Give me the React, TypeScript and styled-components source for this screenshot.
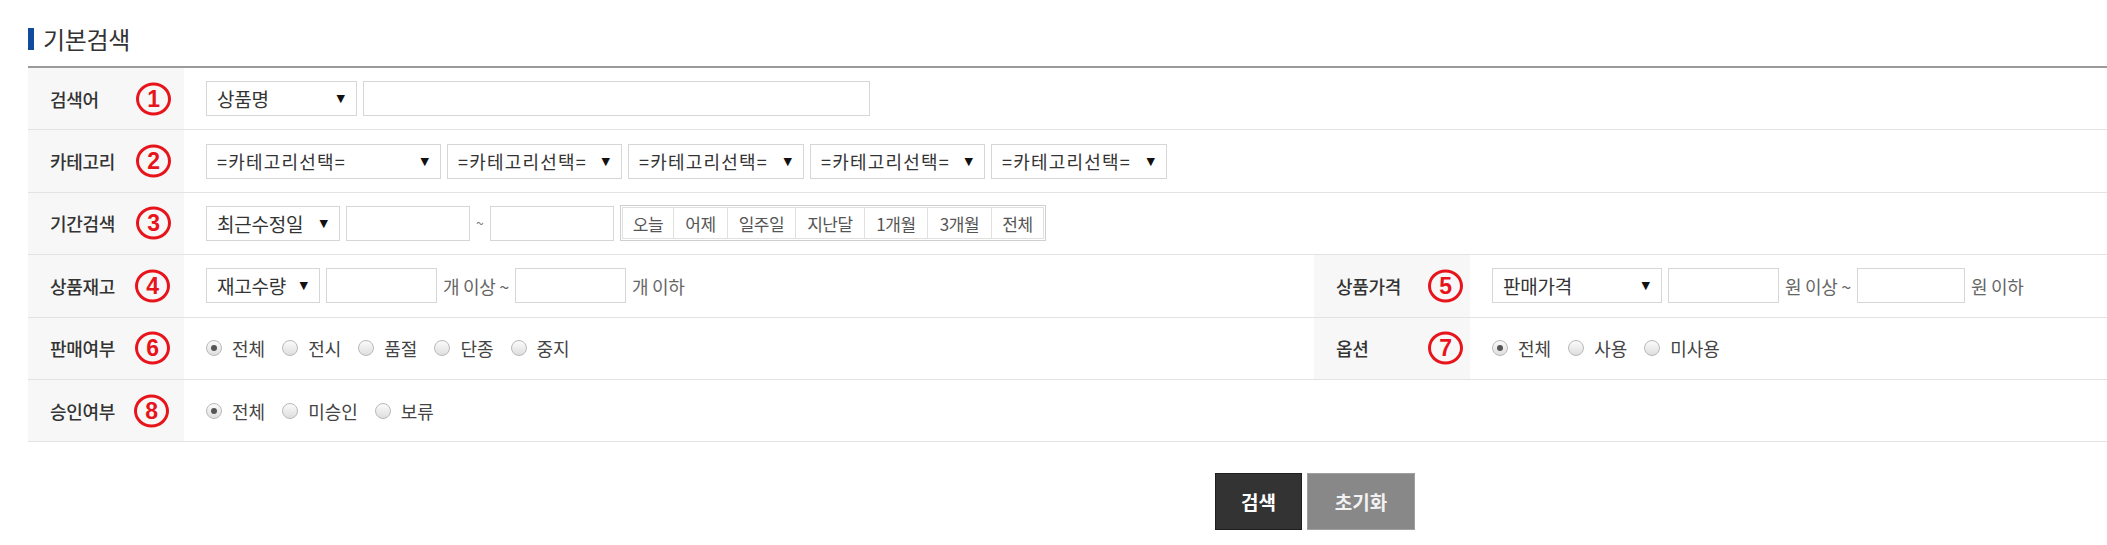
import React from "react";
import styled, { createGlobalStyle } from "styled-components";

const GlobalStyle = createGlobalStyle`
  html, body { margin: 0; padding: 0; background: #fff; }
  body { font-family: "Noto Sans CJK KR", "Noto Sans", sans-serif; color: #333; }
`;

const Page = styled.div`
  padding-left: 28px;
  padding-top: 27px;
`;

const TitleRow = styled.div`
  display: flex;
  align-items: center;
  gap: 9px;
  height: 24px;
`;

const TitleBar = styled.span`
  width: 6px;
  height: 22px;
  background: #114b9b;
`;

const TitleText = styled.h2`
  margin: 0;
  font-size: 24px;
  font-weight: 400;
  color: #333;
  line-height: 24px;
  letter-spacing: -0.3px;
`;

const Table = styled.div`
  margin-top: 15px;
  border-top: 2px solid #9a9a9a;
`;

const Row = styled.div<{ $split?: boolean }>`
  display: grid;
  grid-template-columns: ${(p) => (p.$split ? "156px 1130px 156px 1fr" : "156px 1fr")};
  height: 61.4px;
  border-bottom: 1px solid #e3e3e3;
`;

const Label = styled.div`
  position: relative;
  background: #f7f7f7;
  display: flex;
  align-items: center;
  padding-left: 22px;
  font-size: 18px;
  font-weight: 500;
  color: #333;
  letter-spacing: -0.3px;
`;

const Badge = styled.span<{ $left: number }>`
  position: absolute;
  top: 50%;
  left: ${(p) => p.$left}px;
  transform: translateY(-50%);
  width: 29px;
  height: 27px;
  border: 3px solid #e8141b;
  border-radius: 50%;
  color: #e8141b;
  font-family: "Liberation Sans", Arial, sans-serif;
  font-weight: 700;
  font-size: 23px;
  line-height: 27px;
  text-align: center;
`;

const Cell = styled.div`
  display: flex;
  align-items: center;
  gap: 6px;
  padding-left: 22px;
  font-size: 18px;
  color: #555;
`;

const SelectBox = styled.div<{ $w: number; $spaced?: boolean }>`
  box-sizing: border-box;
  width: ${(p) => p.$w}px;
  height: 35px;
  border: 1px solid #d6d6d6;
  background: #fff;
  display: flex;
  align-items: center;
  justify-content: space-between;
  padding: 0 11px 0 10px;
  font-size: ${(p) => (p.$spaced ? "18px" : "19px")};
  color: #333;
  letter-spacing: ${(p) => (p.$spaced ? "1.2px" : "-0.2px")};
  white-space: nowrap;
`;

const Arrow = styled.span`
  font-size: 11px;
  color: #111;
  letter-spacing: 0;
  margin-left: 6px;
  font-family: "DejaVu Sans", sans-serif;
`;

const TextInput = styled.div<{ $w: number }>`
  box-sizing: border-box;
  width: ${(p) => p.$w}px;
  height: 35px;
  border: 1px solid #d6d6d6;
  background: #fff;
`;

const Tilde = styled.span`
  color: #777;
  font-size: 14px;
  width: 8px;
  text-align: center;
`;

const Unit = styled.span`
  color: #666;
  font-size: 18px;
  letter-spacing: -0.3px;
  white-space: nowrap;
`;

const BtnGroup = styled.div`
  display: flex;
  border: 1px solid #cfcfcf;
  padding: 1px;
`;

const DateBtn = styled.span<{ $w: number }>`
  box-sizing: border-box;
  width: ${(p) => p.$w}px;
  height: 32px;
  display: flex;
  align-items: center;
  justify-content: center;
  border: 1px solid #e0e0e0;
  margin-left: -1px;
  font-size: 17px;
  letter-spacing: -0.4px;
  color: #555;
  background: #fff;
  &:first-child { margin-left: 0; }
`;

const RadioGroup = styled.div`
  display: flex;
  align-items: center;
  gap: 17px;
`;

const RadioItem = styled.label`
  display: flex;
  align-items: center;
  gap: 10px;
  font-size: 18px;
  color: #444;
`;

const RadioDot = styled.span<{ $on?: boolean }>`
  position: relative;
  box-sizing: border-box;
  width: 16px;
  height: 16px;
  border-radius: 50%;
  border: 1px solid #b9b9b9;
  background: linear-gradient(#fbfbfb, #dedede);
  &::after {
    content: "";
    display: ${(p) => (p.$on ? "block" : "none")};
    position: absolute;
    left: 4px;
    top: 4px;
    width: 6px;
    height: 6px;
    border-radius: 50%;
    background: #555;
  }
`;

const ButtonRow = styled.div`
  display: flex;
  gap: 5px;
  margin-top: 31px;
  margin-left: 1187px;
`;

const ActionBtn = styled.button<{ $primary?: boolean; $w: number }>`
  width: ${(p) => p.$w}px;
  height: 57px;
  border: 1px solid ${(p) => (p.$primary ? "#1f1f1f" : "#a0a0a0")};
  background: ${(p) => (p.$primary ? "#333" : "#888")};
  color: ${(p) => (p.$primary ? "#fff" : "#f2f2f2")};
  font-family: "Noto Sans CJK KR", sans-serif;
  font-size: 19px;
  font-weight: 700;
  padding: 0;
  cursor: pointer;
`;

const Radios = ({ items, checked = 0 }: { items: string[]; checked?: number }) => (
  <RadioGroup>
    {items.map((t, i) => (
      <RadioItem key={t}>
        <RadioDot $on={i === checked} />
        {t}
      </RadioItem>
    ))}
  </RadioGroup>
);

const Select = ({ w, text, spaced }: { w: number; text: string; spaced?: boolean }) => (
  <SelectBox $w={w} $spaced={spaced}>
    <span>{text}</span>
    <Arrow>▼</Arrow>
  </SelectBox>
);

const dateBtns: [string, number][] = [
  ["오늘", 52],
  ["어제", 55],
  ["일주일", 69],
  ["지난달", 70],
  ["1개월", 64],
  ["3개월", 65],
  ["전체", 53],
];

export default function App() {
  return (
    <Page>
      <GlobalStyle />
      <TitleRow>
        <TitleBar />
        <TitleText>기본검색</TitleText>
      </TitleRow>
      <Table>
        <Row>
          <Label>
            검색어<Badge $left={108}>1</Badge>
          </Label>
          <Cell>
            <Select w={151} text="상품명" />
            <TextInput $w={507} />
          </Cell>
        </Row>
        <Row>
          <Label>
            카테고리<Badge $left={108}>2</Badge>
          </Label>
          <Cell>
            <Select w={235} text="=카테고리선택=" spaced />
            <Select w={175} text="=카테고리선택=" spaced />
            <Select w={176} text="=카테고리선택=" spaced />
            <Select w={175} text="=카테고리선택=" spaced />
            <Select w={176} text="=카테고리선택=" spaced />
          </Cell>
        </Row>
        <Row>
          <Label>
            기간검색<Badge $left={108}>3</Badge>
          </Label>
          <Cell>
            <Select w={134} text="최근수정일" />
            <TextInput $w={124} />
            <Tilde>~</Tilde>
            <TextInput $w={124} />
            <BtnGroup>
              {dateBtns.map(([t, w]) => (
                <DateBtn key={t} $w={w}>
                  {t}
                </DateBtn>
              ))}
            </BtnGroup>
          </Cell>
        </Row>
        <Row $split>
          <Label>
            상품재고<Badge $left={107}>4</Badge>
          </Label>
          <Cell>
            <Select w={114} text="재고수량" />
            <TextInput $w={111} />
            <Unit>개 이상 ~</Unit>
            <TextInput $w={111} />
            <Unit>개 이하</Unit>
          </Cell>
          <Label>
            상품가격<Badge $left={114}>5</Badge>
          </Label>
          <Cell>
            <Select w={170} text="판매가격" />
            <TextInput $w={111} />
            <Unit>원 이상 ~</Unit>
            <TextInput $w={108} />
            <Unit>원 이하</Unit>
          </Cell>
        </Row>
        <Row $split>
          <Label>
            판매여부<Badge $left={107}>6</Badge>
          </Label>
          <Cell>
            <Radios items={["전체", "전시", "품절", "단종", "중지"]} />
          </Cell>
          <Label>
            옵션<Badge $left={114}>7</Badge>
          </Label>
          <Cell>
            <Radios items={["전체", "사용", "미사용"]} />
          </Cell>
        </Row>
        <Row>
          <Label>
            승인여부<Badge $left={106}>8</Badge>
          </Label>
          <Cell>
            <Radios items={["전체", "미승인", "보류"]} />
          </Cell>
        </Row>
      </Table>
      <ButtonRow>
        <ActionBtn $primary $w={87}>
          검색
        </ActionBtn>
        <ActionBtn $w={108}>초기화</ActionBtn>
      </ButtonRow>
    </Page>
  );
}
